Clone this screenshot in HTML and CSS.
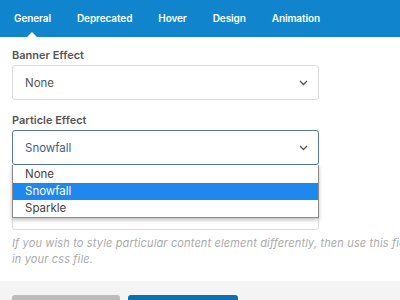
FILE: index.html
```html
<!DOCTYPE html>
<html>
<head>
<meta charset="utf-8">
<link rel="stylesheet" href="styles.css">
</head>
<body>
<div class="tabs">
  <span class="tab active">General</span>
  <span class="tab">Deprecated</span>
  <span class="tab">Hover</span>
  <span class="tab">Design</span>
  <span class="tab">Animation</span>
</div>
<div class="content">
  <div class="field">
    <div class="label">Banner Effect</div>
    <div class="select">
      <span>None</span>
      <svg class="chev" width="9" height="6" viewBox="0 0 9 6"><path d="M1 1l3.5 3.5L8 1" fill="none" stroke="#555" stroke-width="1.3"/></svg>
    </div>
  </div>
  <div class="field">
    <div class="label">Particle Effect</div>
    <div class="select-wrap">
      <div class="select focused">
        <span>Snowfall</span>
        <svg class="chev" width="9" height="6" viewBox="0 0 9 6"><path d="M1 1l3.5 3.5L8 1" fill="none" stroke="#555" stroke-width="1.3"/></svg>
      </div>
      <ul class="options">
        <li>None</li>
        <li class="hl">Snowfall</li>
        <li>Sparkle</li>
      </ul>
    </div>
  </div>
  <div class="field">
    <div class="label spacer"></div>
    <div class="input"></div>
  </div>
  <p class="help">If you wish to style particular content element differently, then use this field to add a class name and then refer to it<br>in your css file.</p>
</div>
<div class="footer">
  <span class="btn gray"></span>
  <span class="btn blue"></span>
</div>
</body>
</html>
```
FILE: styles.css
```css
html, body {
  margin: 0;
  padding: 0;
  overflow: hidden;
  background: #fff;
  font-family: Inter, "Open Sans", sans-serif;
}
.tabs {
  height: 37px;
  background: #1085cd;
  display: flex;
  align-items: center;
  gap: 26px;
  padding: 0 14px;
  box-sizing: border-box;
}
.tab {
  color: #fff;
  font-size: 10px;
  font-weight: 600;
  position: relative;
  line-height: 37px;
  letter-spacing: -0.1px;
}
.tab.active::after {
  content: "";
  position: absolute;
  left: 50%;
  bottom: 0;
  margin-left: -5px;
  border-left: 5px solid transparent;
  border-right: 5px solid transparent;
  border-bottom: 5px solid #fff;
}
.content {
  padding: 10px 12px 0;
}
.field {
  width: 307px;
  margin-bottom: 12px;
}
.label {
  font-size: 11px;
  font-weight: 600;
  color: #555;
  line-height: 16px;
  margin-bottom: 2px;
}
.label.spacer {
  height: 16px;
}
.select, .input {
  height: 35px;
  box-sizing: border-box;
  border: 1px solid #dcdcdc;
  border-radius: 3px;
  display: flex;
  align-items: center;
  justify-content: space-between;
  padding: 0 10px 0 12px;
  font-size: 11.5px;
  color: #555;
}
.select.focused {
  border-color: #56789a;
  color: #3d6184;
}
.select-wrap {
  position: relative;
}
.options {
  position: absolute;
  left: 0;
  right: 0;
  top: 35px;
  margin: 0;
  padding: 1px 0 0;
  list-style: none;
  background: #fff;
  border: 1px solid #8a8a8a;
  border-top: none;
  box-shadow: 0 2px 4px rgba(0,0,0,0.25);
  z-index: 2;
}
.options li {
  height: 17px;
  line-height: 17px;
  font-size: 11.5px;
  color: #444;
  padding-left: 12px;
}
.options li.hl {
  background: #1e88ef;
  color: #fff;
}
.help {
  margin: -7px 0 0;
  white-space: nowrap;
  font-size: 11px;
  letter-spacing: 0.15px;
  font-style: italic;
  color: #aaa;
  line-height: 16px;
}
.footer {
  margin-top: 14px;
  background: #f4f4f4;
  height: 40px;
  padding: 14px 12px 0;
  box-sizing: border-box;
  display: flex;
  gap: 8px;
}
.btn {
  display: block;
  height: 30px;
  border-radius: 3px 3px 0 0;
}
.btn.gray { width: 108px; background: #bcbcbc; }
.btn.blue { width: 110px; background: #0f6fad; }
```
